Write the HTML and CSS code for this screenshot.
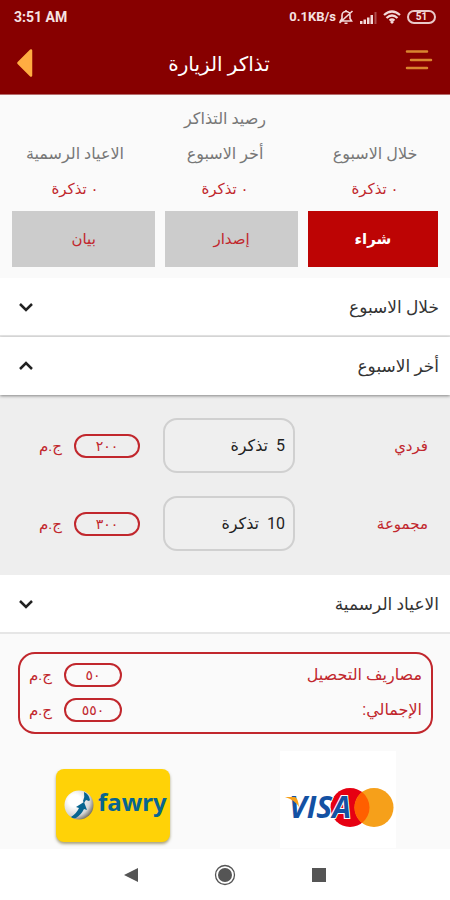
FILE: index.html
```html
<!DOCTYPE html>
<html lang="ar" dir="rtl">
<head>
<meta charset="utf-8">
<meta name="viewport" content="width=device-width, initial-scale=1">
<title>تذاكر الزيارة</title>
<link rel="stylesheet" href="styles.css">
</head>
<body>
<div class="status" dir="ltr">
  <span class="clock">3:51 AM</span>
  <div class="signals">
    <span>0.1KB/s</span>
    <svg width="16" height="16" viewBox="0 0 16 16" fill="none" stroke="#f3dada" stroke-width="1.600"><path d="M2.500 12h11l-1.500-2.500V6.500a4 4 0 0 0-8 0v3zM6.500 14.200h3M8 1v2M1.500 14 14.500 2"/></svg>
    <svg width="17" height="13" viewBox="0 0 17 13" fill="#f3dada"><path d="M0 10h2.500v3H0zM3.500 8.500H6V13H3.500zM7 6.500h2.500V13H7zM10.500 4H13v9h-2.500z"/><path d="M14.500 1h2v12h-2z" opacity=".35"/></svg>
    <svg width="18" height="14" viewBox="0 0 18 14" fill="none" stroke="#f3dada" stroke-width="2.200"><path d="M1 5q8-7 16 0M3.500 8q5.500-5 11 0M6.500 10.500q2.500-2 5 0"/><path d="M9 10.500 11 12l-2 2-2-2z" fill="#f3dada" stroke="none"/></svg>
    <span class="battery">51</span>
  </div>
</div>
<header class="header">
  <button class="icon-button" aria-label="القائمة"><svg width="28" height="22" viewBox="0 0 28 22" stroke="#d9852f" stroke-width="2.500" stroke-linecap="round"><path d="M2 2.500h20M6 11h20M2 19h20"/></svg></button>
  <h1>تذاكر الزيارة</h1>
  <button class="icon-button" aria-label="رجوع"><svg width="16" height="28" viewBox="0 0 16 28"><path d="M1.500 14 14 1.500v25z" fill="#ffad42" stroke="#ffad42" stroke-width="2.500" stroke-linejoin="round"/></svg></button>
</header>
<main>
  <section class="balance">
    <h2>رصيد التذاكر</h2>
    <dl class="counts">
      <div><dt>خلال الاسبوع</dt><dd>٠ تذكرة</dd></div>
      <div><dt>أخر الاسبوع</dt><dd>٠ تذكرة</dd></div>
      <div><dt>الاعياد الرسمية</dt><dd>٠ تذكرة</dd></div>
    </dl>
    <div class="tabs">
      <button class="tab active">شراء</button>
      <button class="tab">إصدار</button>
      <button class="tab">بيان</button>
    </div>
  </section>
  <section class="accordion">
    <button class="fold" aria-expanded="false"><span>خلال الاسبوع</span><svg width="16" height="10" viewBox="0 0 16 10"><path d="m2 2 6 6 6-6"/></svg></button>
    <button class="fold open" aria-expanded="true"><span>أخر الاسبوع</span><svg width="16" height="10" viewBox="0 0 16 10"><path d="m2 8 6-6 6 6"/></svg></button>
    <div class="panel">
      <div class="ticket">
        <label for="single">فردي</label>
        <input id="single" type="text" value="5  تذكرة">
        <div class="price"><output class="pill">٢٠٠</output><span>ج.م</span></div>
      </div>
      <div class="ticket">
        <label for="group">مجموعة</label>
        <input id="group" type="text" value="10  تذكرة">
        <div class="price"><output class="pill">٣٠٠</output><span>ج.م</span></div>
      </div>
    </div>
    <button class="fold" aria-expanded="false"><span>الاعياد الرسمية</span><svg width="16" height="10" viewBox="0 0 16 10"><path d="m2 2 6 6 6-6"/></svg></button>
  </section>
  <section class="summary">
    <div class="line"><span>مصاريف التحصيل</span><div class="price"><output class="pill">٥٠</output><span>ج.م</span></div></div>
    <div class="line"><span>الإجمالي:</span><div class="price"><output class="pill">٥٥٠</output><span>ج.م</span></div></div>
  </section>
  <section class="payments">
    <button class="pay visa" aria-label="Visa / Mastercard">
      <svg width="116" height="97" viewBox="0 0 116 97" direction="ltr">
        <circle cx="70" cy="56.500" r="19.500" fill="#e60012"/>
        <circle cx="94" cy="56.500" r="19.500" fill="#f6a01a"/>
        <path d="M82 41.100a19.500 19.500 0 0 1 0 30.800 19.500 19.500 0 0 1 0-30.800z" fill="#ff5f00"/>
        <text class="visa-word" x="9" y="67">VISA</text>
        <path d="M5 46h10q3 1 4 10-4-7-14-10z" fill="#f6a01a"/>
      </svg>
    </button>
    <button class="pay fawry" aria-label="Fawry">
      <svg width="114" height="73" viewBox="0 0 114 73" direction="ltr">
        <defs><radialGradient id="ball" cx=".35" cy=".35" r=".7"><stop offset=".3" stop-color="#fff"/><stop offset=".75" stop-color="#d5d5d5"/><stop offset="1" stop-color="#77736a"/></radialGradient></defs>
        <circle cx="23" cy="36" r="14.500" fill="url(#ball)"/>
        <path d="M15 48q6-4 8-9l-3-1 8-5 3 8-3-1q-3 6-8 9-3 1-5-1z" fill="#076590"/>
        <path d="M27 32q2-4 1-9 5 2 6 8l-1 1-3-1-2 3z" fill="#076590"/>
        <text class="fawry-word" x="42" y="42">fawry</text>
      </svg>
    </button>
  </section>
</main>
<nav class="system" dir="ltr">
  <button class="icon-button" aria-label="Back"><svg width="14" height="16" viewBox="0 0 14 16"><path d="M0 8 14 1v14z" fill="#555"/></svg></button>
  <button class="icon-button" aria-label="Home"><svg width="22" height="22" viewBox="0 0 22 22"><circle cx="11" cy="11" r="9.500" fill="none" stroke="#555" stroke-width="1.300"/><circle cx="11" cy="11" r="7" fill="#555"/></svg></button>
  <button class="icon-button" aria-label="Recents"><svg width="14" height="14" viewBox="0 0 14 14"><path d="M0 0h14v14H0z" fill="#555"/></svg></button>
</nav>
</body>
</html>
```

FILE: styles.css
```css
* { box-sizing: border-box; }

body {
  margin: 0;
  min-height: 100vh;
  display: flex;
  flex-direction: column;
  background: #fafafa;
  color: #333;
  font: 15px/20px Roboto, "DejaVu Sans", sans-serif;
}

button, input { font: inherit; color: inherit; }
button { border: 0; padding: 0; background: none; }
svg { display: block; }

.status {
  height: 34px;
  padding: 0 14px;
  display: flex;
  align-items: center;
  justify-content: space-between;
  background: #870000;
  color: #f6e2e2;
  font-size: 14px;
  font-weight: 700;
}
.signals { display: flex; align-items: center; gap: 6px; font-size: 13px; }
.signals span:first-child { margin-right: -4px; }
.battery {
  width: 29px;
  height: 14px;
  border: 2px solid #e9c9c9;
  border-radius: 7px;
  font-size: 10px;
  line-height: 10px;
  text-align: center;
}

.header {
  height: 61px;
  padding: 0 17px;
  display: grid;
  grid-template-columns: 28px 1fr 16px;
  align-items: center;
  background: #870000;
  border-bottom: 1px solid #b56c6c;
}
.header .icon-button { align-self: start; padding-top: 15px; }
.header h1 { margin: 0; color: #fff; font-size: 20px; font-weight: 400; line-height: 24px; text-align: center; }

.balance { color: #777; text-align: center; }
.balance h2 { margin: 14px 0 0; font-size: 16px; font-weight: 400; line-height: 20px; }
.counts { margin: 15px 0 12px; display: grid; grid-template-columns: repeat(3, 1fr); }
.counts dt { font-size: 16px; }
.counts dd { margin: 15px 0 0; color: #c1272d; }
.tabs { padding: 0 12px; display: grid; grid-template-columns: 130fr 132fr 143fr; gap: 10px; }
.tab { height: 56px; background: #ccc; color: #c1272d; }
.tab.active { background: #bd0404; color: #fff; font-weight: 700; }

.accordion { margin-top: 11px; background: #fff; }
.fold {
  width: 100%;
  height: 59px;
  padding: 0 11px 0 18px;
  display: flex;
  align-items: center;
  justify-content: space-between;
  border-bottom: 2px solid #e6e6e6;
  background: #fff;
  font-size: 17px;
}
.fold svg { fill: none; stroke: #222; stroke-width: 2.5px; }
.fold.open { position: relative; height: 58px; border-bottom: 0; box-shadow: 0 1px 3px rgba(0, 0, 0, .45); }

.panel { padding: 23px 22px 24px 39px; display: grid; gap: 23px; background: #eee; }
.ticket {
  display: grid;
  grid-template-columns: minmax(0, 133fr) minmax(0, 132fr) minmax(0, 124fr);
  align-items: center;
  color: #c1272d;
}
.ticket input {
  width: 100%;
  height: 55px;
  padding: 0 8px;
  border: 2px solid #d0d0d0;
  border-radius: 14px;
  background: #efefef;
  color: #222;
  font-size: 16px;
  white-space: pre;
}
.price { display: flex; align-items: center; justify-content: flex-end; gap: 12px; color: #c1272d; }
.pill {
  width: 66px;
  height: 24px;
  border: 2px solid #c1272d;
  border-radius: 12px;
  font-size: 14px;
  line-height: 20px;
  text-align: center;
}

.summary {
  margin: 18px 17px 0 18px;
  padding: 9px 9px 10px;
  display: grid;
  gap: 11px;
  border: 2px solid #c1272d;
  border-radius: 17px;
  color: #c1272d;
}
.line { display: flex; align-items: center; justify-content: space-between; }
.line > span { font-size: 16px; }
.summary .pill { width: 58px; }

.payments { padding: 17px 54px 0 56px; display: flex; justify-content: space-between; align-items: flex-end; }
.visa { background: #fff; }
.fawry { margin-bottom: 6px; border-radius: 8px; background: #ffd207; box-shadow: 0 2px 3px rgba(90, 75, 0, .5); }
.visa-word { font: italic 700 30px "Open Sans", sans-serif; fill: #1351a3; stroke: #fff; stroke-width: 2px; paint-order: stroke; }
.fawry-word { font: 700 24px "Noto Sans", sans-serif; fill: #076590; }

.system {
  height: 51px;
  margin-top: auto;
  padding: 0 124px;
  display: flex;
  align-items: center;
  justify-content: space-between;
  background: #fff;
}
```
